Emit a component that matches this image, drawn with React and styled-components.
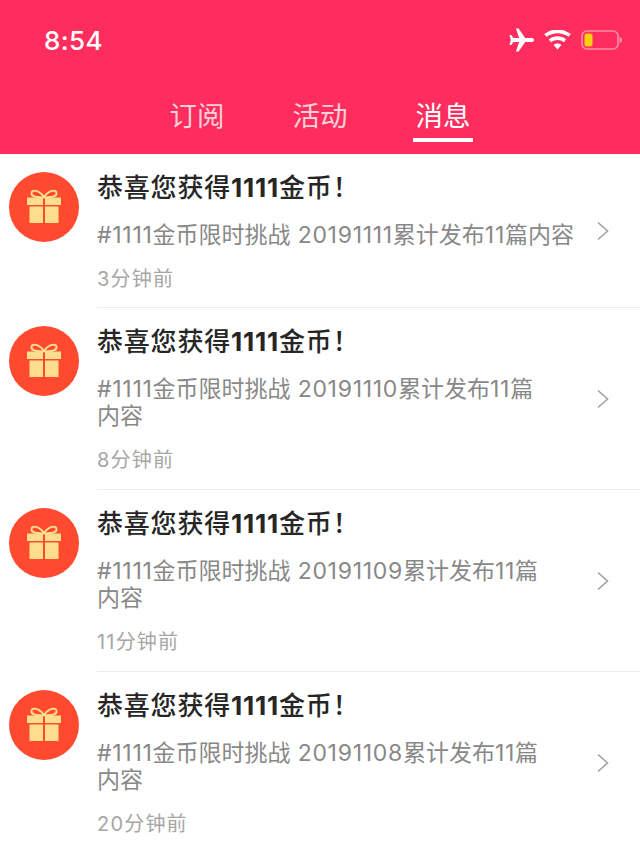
import React from "react";
import styled, { createGlobalStyle } from "styled-components";

const GlobalStyle = createGlobalStyle`
  html, body {
    margin: 0;
    padding: 0;
    background: #fff;
  }
  body {
    font-family: "Inter", "Noto Sans CJK SC", sans-serif;
  }
`;

const Page = styled.div`
  width: 640px;
  height: 853px;
  overflow: hidden;
  background: #fff;
`;

const Header = styled.header`
  height: 154px;
  background: #ff2d5d;
  display: flex;
  flex-direction: column;
`;

const StatusBar = styled.div`
  height: 80px;
  padding: 0 18px 0 44px;
  display: flex;
  align-items: center;
  justify-content: space-between;
`;

const Clock = styled.span`
  color: #fff;
  font-size: 26px;
  font-weight: 500;
  letter-spacing: 0.4px;
`;

const StatusIcons = styled.div`
  display: flex;
  align-items: center;
  gap: 10px;
`;

const Tabs = styled.nav`
  display: flex;
  justify-content: center;
  gap: 63px;
`;

const Tab = styled.div`
  height: 62px;
  box-sizing: border-box;
  padding-top: 17px;
  width: 60px;
  text-align: center;
  white-space: nowrap;
  font-size: 27.5px;
  line-height: 38px;
  color: ${(p) => (p.$active ? "#ffffff" : "#ffd0da")};
  border-bottom: 4px solid ${(p) => (p.$active ? "#ffffff" : "transparent")};
  display: flex;
  justify-content: center;
`;

const Row = styled.div`
  display: flex;
  height: ${(p) => p.$height}px;
  box-sizing: border-box;
`;

const Avatar = styled.div`
  flex: none;
  width: 70px;
  height: 70px;
  margin: 18px 18px 0 9px;
  border-radius: 50%;
  background: #ff4a2f;
  display: flex;
  align-items: center;
  justify-content: center;
`;

const GiftSvg = styled.svg`
  margin-bottom: 3px;
`;

const Main = styled.div`
  flex: 1;
  display: flex;
  align-items: center;
  border-bottom: ${(p) => (p.$last ? "none" : "1px solid #ececec")};
`;

const Texts = styled.div`
  flex: none;
  width: 481px;
  align-self: flex-start;
  padding-top: 17px;
`;

const Title = styled.div`
  font-size: 26px;
  line-height: 34px;
  font-weight: 500;
  letter-spacing: 0.8px;
  color: #262626;
`;

const TitleNum = styled.span`
  font-weight: 700;
`;

const Body = styled.div`
  margin-top: 17px;
  font-size: 23px;
  line-height: 27px;
  color: #888888;
`;

const Num = styled.span`
  letter-spacing: 0.7px;
`;

const Word = styled.span`
  white-space: nowrap;
`;

const Time = styled.div`
  margin-top: 16px;
  font-size: 20px;
  line-height: 28px;
  letter-spacing: 1.2px;
  color: #a6a6a6;
`;

const Chevron = styled.svg`
  flex: none;
  margin-left: 18px;
`;

const GiftIcon = () => (
  <GiftSvg width="36" height="36" viewBox="0 0 36 36">
    <path
      d="M18 9 C13 2 6 1 5.5 5 C5 9 12 9.5 18 9 C24 9.5 31 9 30.5 5 C30 1 23 2 18 9 Z"
      fill="none"
      stroke="#fedd8e"
      strokeWidth="2"
    />
    <path
      d="M1 9.5 H17 V17 H1 Z M19 9.5 H35 V17 H19 Z M3.5 18.5 H17 V35 H3.5 Z M19 18.5 H32.5 V35 H19 Z"
      fill="#fedd8e"
    />
  </GiftSvg>
);

const PlaneIcon = () => (
  <svg width="25" height="24" viewBox="0 0 25 24">
    <path
      d="M25 12 C25 10.6 23.6 10 22 10 H16.2 L9.6 0.5 H6.9 L10.2 10 H4.6 L2.2 7 H0.4 L1.8 12 L0.4 17 H2.2 L4.6 14 H10.2 L6.9 23.5 H9.6 L16.2 14 H22 C23.6 14 25 13.4 25 12 Z"
      fill="#fff"
    />
  </svg>
);

const WifiIcon = () => (
  <svg width="27" height="20" viewBox="0 0 27 20">
    <path
      d="M13.5 19.5 L9.6 15 C11.8 13.1 15.2 13.1 17.4 15 Z M7.2 12.2 L4.8 9.4 C9.8 5.2 17.2 5.2 22.2 9.4 L19.8 12.2 C16.1 9.2 10.9 9.2 7.2 12.2 Z M2.5 6.8 L0.2 4.1 C7.9 -1.9 19.1 -1.9 26.8 4.1 L24.5 6.8 C18 1.9 9 1.9 2.5 6.8 Z"
      fill="#fff"
    />
  </svg>
);

const BatteryIcon = () => (
  <svg width="41" height="20" viewBox="0 0 41 20">
    <rect x="1" y="1" width="36" height="18" rx="5" fill="none" stroke="#ff8fa8" strokeWidth="1.6" />
    <rect x="3.5" y="3.5" width="8" height="13" rx="2.5" fill="#fdd00f" />
    <path d="M38.5 7 C40.2 7.5 41 8.5 41 10 C41 11.5 40.2 12.5 38.5 13 Z" fill="#ff8fa8" />
  </svg>
);

const items = [
  { height: 154, code: "20191111", time: "3分钟前" },
  { height: 182, code: "20191110", time: "8分钟前" },
  { height: 182, code: "20191109", time: "11分钟前" },
  { height: 181, code: "20191108", time: "20分钟前", last: true },
];

export default function App() {
  return (
    <Page>
      <GlobalStyle />
      <Header>
        <StatusBar>
          <Clock>8:54</Clock>
          <StatusIcons>
            <PlaneIcon />
            <WifiIcon />
            <BatteryIcon />
          </StatusIcons>
        </StatusBar>
        <Tabs>
          <Tab>订阅</Tab>
          <Tab>活动</Tab>
          <Tab $active>消息</Tab>
        </Tabs>
      </Header>
      {items.map((item) => (
        <Row key={item.code} $height={item.height}>
          <Avatar>
            <GiftIcon />
          </Avatar>
          <Main $last={item.last}>
            <Texts>
              <Title>恭喜您获得<TitleNum>1111</TitleNum>金币！</Title>
              <Body>
                <Num>#1111</Num>金币限时挑战<Num> {item.code}</Num>累计发布<Num>11</Num>篇<Word>内容</Word>
              </Body>
              <Time>{item.time}</Time>
            </Texts>
            <Chevron width="14" height="20" viewBox="0 0 14 20" fill="none">
              <path d="M2 1.5 L11.5 10 L2 18.5" stroke="#a0a0a0" strokeWidth="1.6" />
            </Chevron>
          </Main>
        </Row>
      ))}
    </Page>
  );
}
